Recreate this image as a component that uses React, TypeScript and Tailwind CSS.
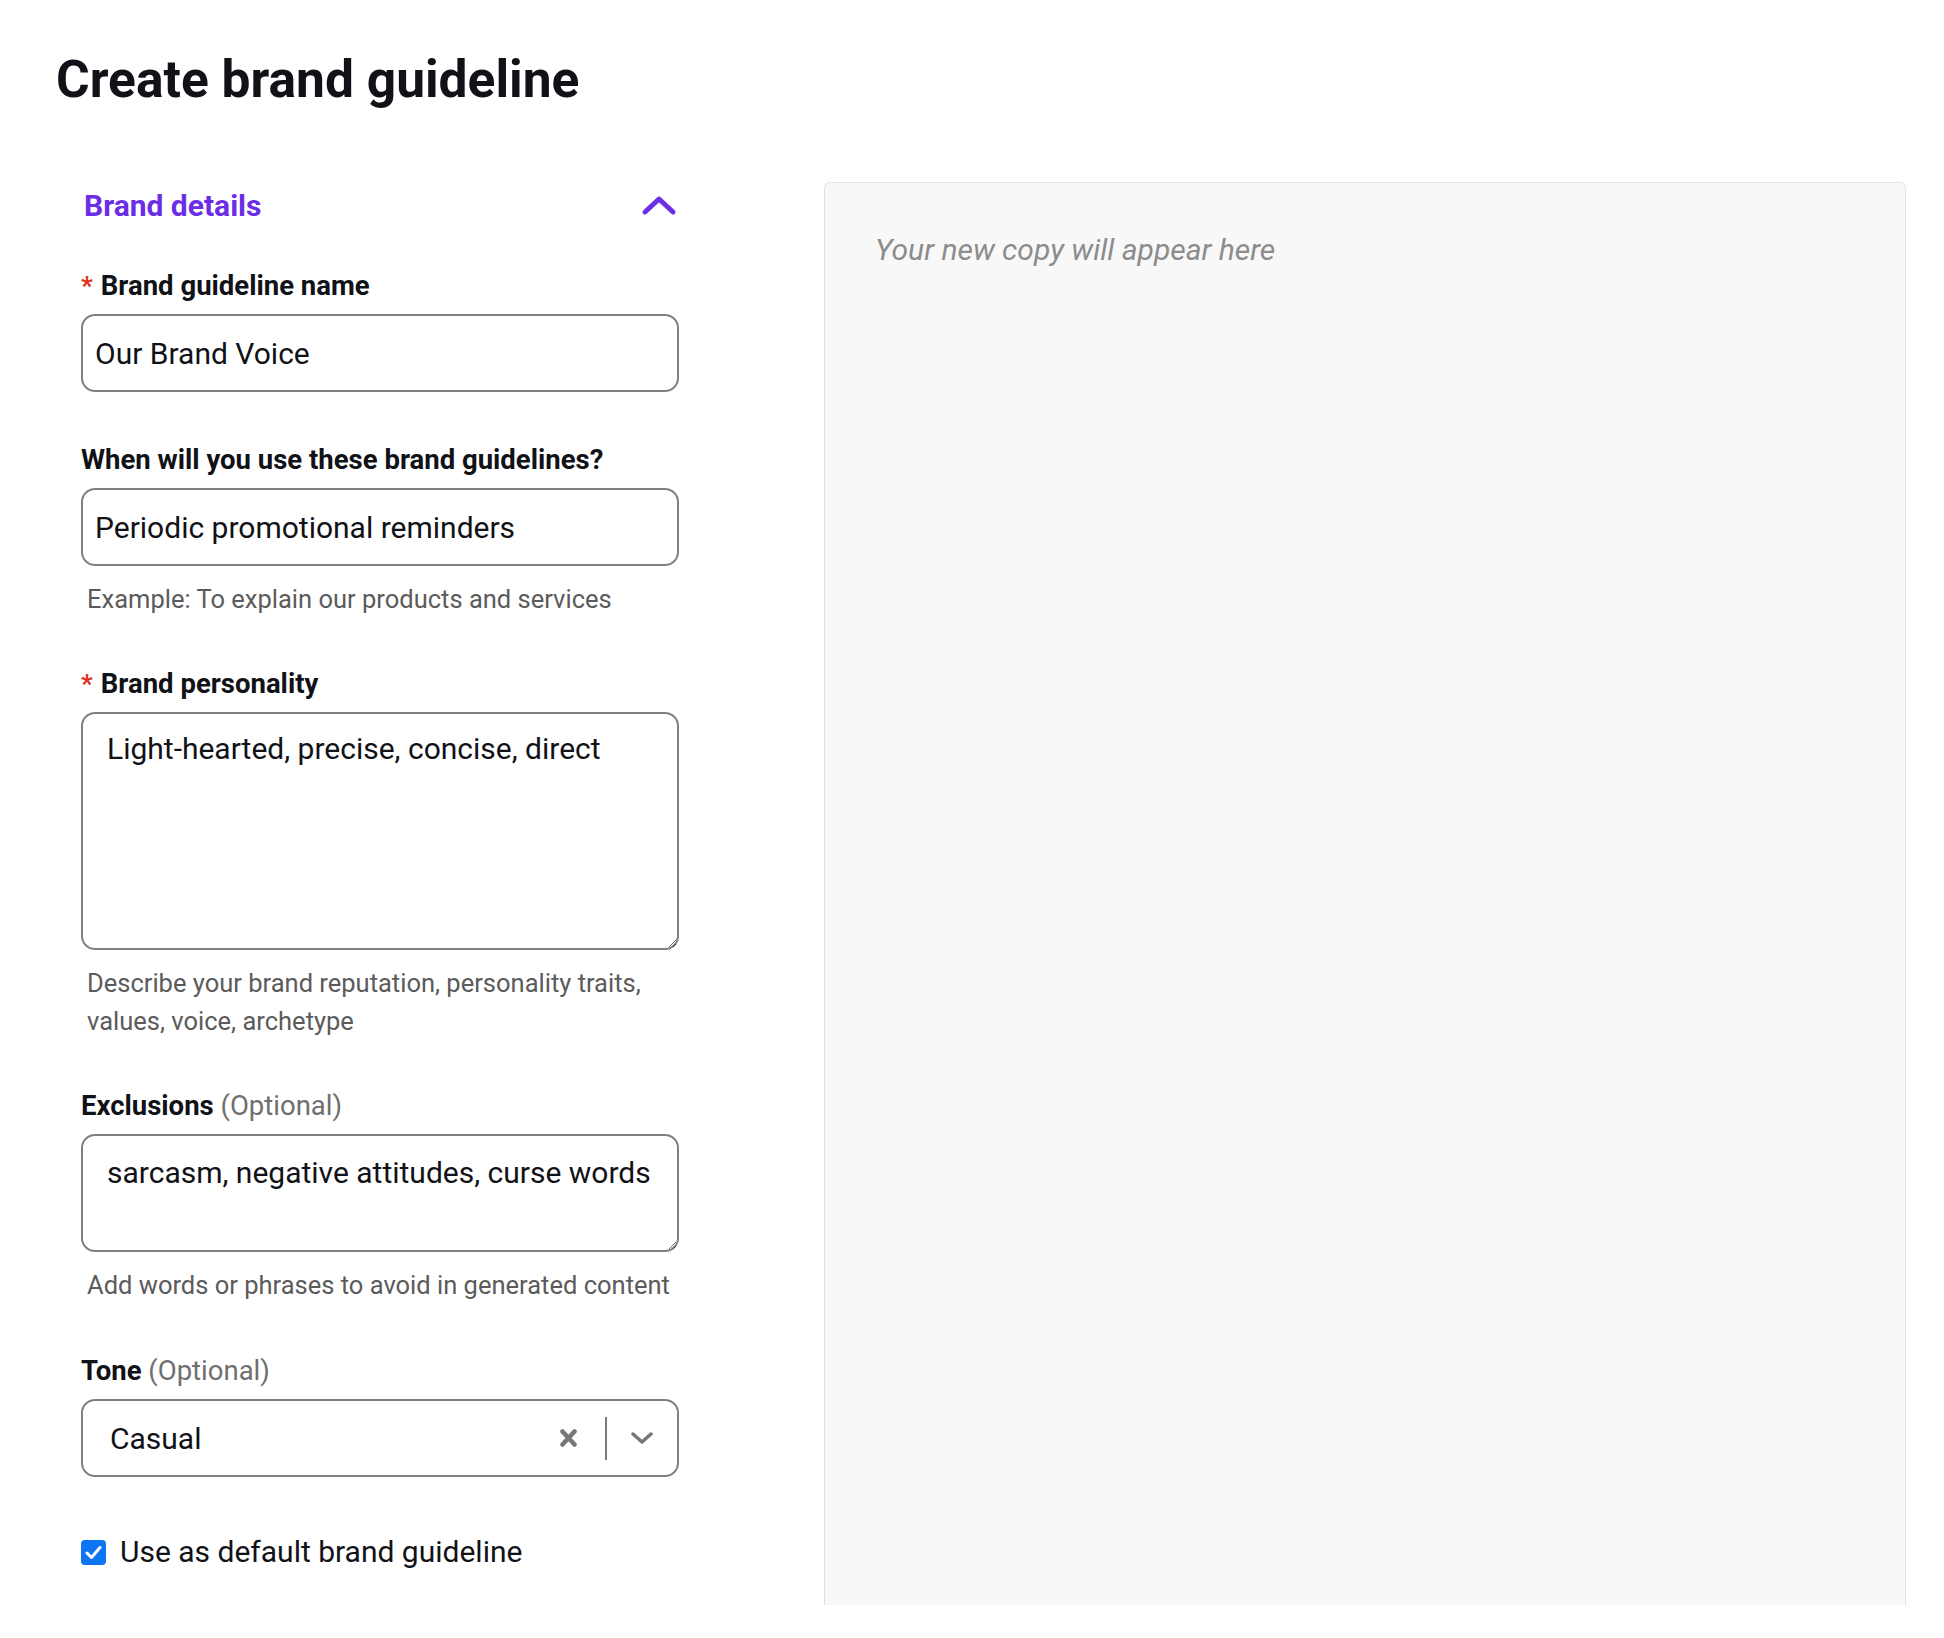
import { useState } from "react";

const Label = ({ text, required, optional }: { text: string; required?: boolean; optional?: boolean }) => (
  <div className="text-[27.5px] leading-[36px] font-bold text-[#111217] mb-[10px] whitespace-nowrap">
    {required && <span className="text-[#e0301e] mr-[8px] text-[26px] align-top">*</span>}
    {text}
    {optional && <span className="font-normal text-[#6f6f6f]"> (Optional)</span>}
  </div>
);

const Helper = ({ children }: { children: React.ReactNode }) => (
  <p className="mt-[14px] pl-[6px] text-[25.5px] leading-[38px] text-[#5b5b5b] whitespace-nowrap">{children}</p>
);

export default function App() {
  const [isDefault, setIsDefault] = useState(true);

  return (
    <div className="min-h-screen bg-white font-['Roboto',sans-serif] text-[#111217] pl-[56px] pt-[48px]">
      <h1 className="text-[51.5px] leading-[64px] font-bold">Create brand guideline</h1>

      <div className="flex mt-[70px]">
        {/* form column */}
        <div className="ml-[25px] w-[598px] shrink-0">
          <div className="flex items-center justify-between h-[46px]">
            <span className="pl-[3px] text-[30px] font-bold text-[#6b2ee6]">Brand details</span>
            <svg width="36" height="22" viewBox="0 0 36 22" className="mr-[2px]">
              <polyline points="4,18 18,5 32,18" fill="none" stroke="#6b2ee6" strokeWidth="5" strokeLinecap="round" strokeLinejoin="round" />
            </svg>
          </div>

          <div className="mt-[40px]">
            <Label text="Brand guideline name" required />
            <input
              readOnly
              value="Our Brand Voice"
              className="w-full h-[78px] px-3 text-[30px] text-[#111217] border-2 border-[#808080] rounded-[14px] outline-none"
            />
          </div>

          <div className="mt-[50px]">
            <Label text="When will you use these brand guidelines?" />
            <input
              readOnly
              value="Periodic promotional reminders"
              className="w-full h-[78px] px-3 text-[30px] text-[#111217] border-2 border-[#808080] rounded-[14px] outline-none"
            />
            <Helper>Example: To explain our products and services</Helper>
          </div>

          <div className="mt-[48px]">
            <Label text="Brand personality" required />
            <textarea
              readOnly
              defaultValue="Light-hearted, precise, concise, direct"
              className="block w-full h-[238px] px-6 pt-4 text-[30px] leading-[38px] text-[#111217] border-2 border-[#808080] rounded-[14px] outline-none resize-y"
            />
            <Helper>
              Describe your brand reputation, personality traits,
              <br />
              values, voice, archetype
            </Helper>
          </div>

          <div className="mt-[48px]">
            <Label text="Exclusions" optional />
            <textarea
              readOnly
              defaultValue="sarcasm, negative attitudes, curse words"
              className="block w-full h-[118px] px-6 pt-[18px] text-[30px] leading-[38px] text-[#111217] border-2 border-[#808080] rounded-[14px] outline-none resize-y"
            />
            <Helper>Add words or phrases to avoid in generated content</Helper>
          </div>

          <div className="mt-[49px]">
            <Label text="Tone" optional />
            <div className="flex items-center h-[78px] border-2 border-[#808080] rounded-[14px] pl-[27px] pr-[24px]">
              <span className="flex-1 text-[30px] text-[#111217]">Casual</span>
              <svg width="17" height="18" viewBox="0 0 17 18">
                <path d="M2.5 2.5 L14.5 15.5 M14.5 2.5 L2.5 15.5" stroke="#777777" strokeWidth="4.5" strokeLinecap="round" />
              </svg>
              <span className="ml-[28px] w-[2px] h-[43px] bg-[#7a7a7a]" />
              <svg width="22" height="12" viewBox="0 0 22 12" className="ml-[24px]">
                <polyline points="2,2 11,10 20,2" fill="none" stroke="#777777" strokeWidth="3.5" strokeLinecap="round" strokeLinejoin="round" />
              </svg>
            </div>
          </div>

          <label className="mt-[56px] flex items-center gap-[14px] cursor-pointer">
            <span
              onClick={() => setIsDefault(!isDefault)}
              className={`w-[25px] h-[25px] rounded-[4px] flex items-center justify-center ${isDefault ? "bg-[#0d74f2]" : "border-2 border-[#808080] bg-white"}`}
            >
              {isDefault && (
                <svg width="17" height="15" viewBox="0 0 17 15">
                  <polyline points="2,8 6.5,12.5 15,2.5" fill="none" stroke="#ffffff" strokeWidth="3" strokeLinecap="round" strokeLinejoin="round" />
                </svg>
              )}
            </span>
            <span className="text-[30px] leading-[38px] text-[#111217]">Use as default brand guideline</span>
          </label>
        </div>

        {/* preview panel */}
        <div className="ml-[145px] w-[1082px] h-[1423px] bg-[#f8f8f8] border-[1.5px] border-b-0 border-[#e2e2e2] rounded-t-[6px] pl-[50px] pt-[48px]">
          <p className="text-[30px] leading-[38px] italic text-[#8c8c8c]">Your new copy will appear here</p>
        </div>
      </div>
    </div>
  );
}
